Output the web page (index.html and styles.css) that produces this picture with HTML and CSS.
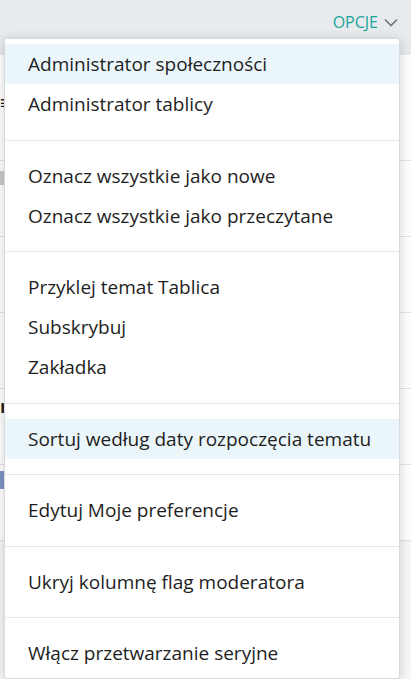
FILE: index.html
```html
<!DOCTYPE html>
<html lang="pl">
<head>
  <meta charset="UTF-8" />
  <title>Opcje</title>
  <link rel="stylesheet" href="styles.css">
</head>
<body>
  <div class="topbar">
    <button class="options-btn">OPCJE
      <svg width="14" height="9" viewBox="0 0 14 9"><path d="M1 1.5l6 6 6-6" fill="none" stroke="#6b7480" stroke-width="1.6"/></svg>
    </button>
  </div>

  <div class="page">
    <div class="row"><span class="icon-lines">≡</span></div>
    <div class="row"><span class="chip"></span></div>
    <div class="row"></div>
    <div class="row"></div>
    <div class="row"><b>r</b></div>
    <div class="row"><span class="bar"></span></div>
  </div>

  <div class="menu">
    <ul class="group first">
      <li class="active">Administrator społeczności</li>
      <li>Administrator tablicy</li>
    </ul>
    <ul class="group">
      <li>Oznacz wszystkie jako nowe</li>
      <li>Oznacz wszystkie jako przeczytane</li>
    </ul>
    <ul class="group">
      <li>Przyklej temat Tablica</li>
      <li>Subskrybuj</li>
      <li>Zakładka</li>
    </ul>
    <ul class="group">
      <li class="active">Sortuj według daty rozpoczęcia tematu</li>
    </ul>
    <ul class="group">
      <li>Edytuj Moje preferencje</li>
    </ul>
    <ul class="group">
      <li>Ukryj kolumnę flag moderatora</li>
    </ul>
    <ul class="group last">
      <li>Włącz przetwarzanie seryjne</li>
    </ul>
  </div>
</body>
</html>
```

FILE: styles.css
```css
body {
  margin: 0;
  font-family: "Open Sans", Arial, sans-serif;
  background-color: #f7f7f7;
  height: 679px;
  overflow: hidden;
  position: relative;
}
.topbar {
  height: 55px;
  background-color: #e8ebee;
  display: flex;
  justify-content: flex-end;
  align-items: flex-start;
  padding-right: 13px;
}
.options-btn {
  margin-top: 11px;
  border: 0;
  background: none;
  padding: 0;
  font-family: inherit;
  font-size: 16px;
  color: #1aa59a;
  display: flex;
  align-items: center;
  gap: 6px;
  cursor: pointer;
}
.page {
  background-color: #fff;
  padding-top: 30px;
}
.row {
  height: 70px;
  border-bottom: 1px solid #e3e3e3;
  font-size: 18px;
  color: #222;
  padding-top: 5px;
}
.icon-lines {
  font-weight: bold;
}
.chip {
  display: inline-block;
  width: 8px;
  height: 14px;
  background-color: #c9c9c9;
}
.bar {
  display: inline-block;
  width: 6px;
  height: 18px;
  background-color: #7a93c8;
}
.menu {
  position: absolute;
  top: 38px;
  left: 4px;
  width: 394px;
  background-color: #fff;
  border: 1px solid #d9d9d9;
  border-radius: 3px;
  box-shadow: 0 2px 12px rgba(0, 0, 0, 0.18);
}
.group {
  list-style: none;
  margin: 0;
  padding: 15px 0 15.5px;
  border-bottom: 1px solid #e6e8ea;
}
.group.first {
  padding-top: 5px;
}
.group.last {
  padding-bottom: 5px;
  border-bottom: 0;
}
.group li {
  height: 40px;
  line-height: 40px;
  padding-left: 23px;
  font-size: 19px;
  color: #1e1e1e;
  white-space: nowrap;
}
.group li.active {
  background-color: #ebf6fb;
}
```
